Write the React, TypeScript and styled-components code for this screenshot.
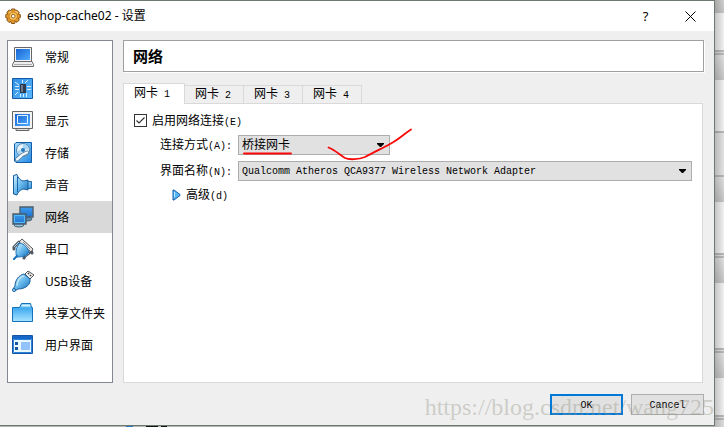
import React, { useState } from "react";
import styled, { createGlobalStyle, css } from "styled-components";

const GlobalStyle = createGlobalStyle`
  *, *::before, *::after { box-sizing: border-box; }
  body { margin: 0; background: #b4b4b4; }
  button, select, input { font: inherit; color: inherit; }
`;

const songFont = `"Liberation Mono", "Noto Sans CJK SC", monospace`;
const uiFont = `"Noto Sans", "Noto Sans CJK SC", sans-serif`;

const Desktop = styled.div`
  display: grid;
  grid-template-columns: minmax(0, 1fr) 9px;
  grid-template-rows: 1fr 1px;
  min-height: 100vh;
  color: #000;
  font: 12px/16px ${songFont};
`;

const Backdrop = styled.div`
  grid-row: 1 / 3;
  grid-column: 2;
  background:
    linear-gradient(to right, rgba(0, 0, 0, 0.18), rgba(0, 0, 0, 0) 9px),
    linear-gradient(
      #d0d0d0 0, #c4c4c4 13px, #f0f0f0 13px, #f0f0f0 50px,
      #b8b8b8 50px, #b8b8b8 52px, #e0e0e0 52px, #e0e0e0 53px, #b8b8b8 53px, #b8b8b8 55px,
      #e0e0e0 55px, #c4c4c4 80px, #f0f0f0 80px, #f0f0f0 131px,
      #b8b8b8 131px, #b8b8b8 133px, #e2e2e2 133px, #e2e2e2 175px,
      #b8b8b8 175px, #b8b8b8 177px, #e0e0e0 177px, #c4c4c4 202px, #f0f0f0 202px, #f0f0f0 253px,
      #b8b8b8 253px, #b8b8b8 255px, #e0e0e0 255px, #e0e0e0 256px, #b8b8b8 256px, #b8b8b8 258px,
      #e0e0e0 258px, #c4c4c4 283px, #f0f0f0 283px, #f0f0f0 348px,
      #b8b8b8 348px, #b8b8b8 350px, #e0e0e0 350px, #e0e0e0 351px, #b8b8b8 351px, #b8b8b8 353px,
      #e0e0e0 353px, #c4c4c4 378px, #f0f0f0 378px, #f0f0f0 415px,
      #b8b8b8 415px, #b8b8b8 417px, #e0e0e0 417px, #e0e0e0 418px, #b8b8b8 418px, #b8b8b8 420px,
      #dcdcdc 420px
    );
`;

const BackdropEdge = styled.div`
  background: linear-gradient(
    to right,
    #b4b4b4 126px, #2878c8 126px, #2878c8 133px, #b4b4b4 133px, #b4b4b4 146px,
    #111 146px, #111 158px, #b4b4b4 158px, #b4b4b4 161px, #111 161px, #111 167px, #b4b4b4 167px
  );
`;

const Dialog = styled.main`
  position: relative;
  display: flex;
  flex-direction: column;
  border: solid #6c7a70;
  border-width: 1px 1px 1px 0;
  background: #efefef;
`;

const TitleBar = styled.header`
  display: flex;
  align-items: center;
  height: 30px;
  padding: 0 1px 0 5px;
  background: #fff;
  font-family: ${uiFont};
`;

const Title = styled.h1`
  flex: 1;
  margin: 0 0 0 5px;
  font-size: 12px;
  font-weight: 400;
`;

const CaptionButton = styled.button`
  display: grid;
  place-items: center;
  width: 45px;
  height: 28px;
  padding: 0;
  border: 0;
  background: none;
  font-size: 13px;
`;

const Body = styled.div`
  flex: 1;
  display: flex;
  gap: 10px;
  padding: 9px 10px 11px 7px;
`;

const Sidebar = styled.nav`
  flex: none;
  width: 106px;
  border: 1px solid #828790;
  background: #fff;
  font-family: ${uiFont};
`;

const NavItem = styled.button<{ $active: boolean }>`
  display: flex;
  align-items: center;
  gap: 11px;
  width: 100%;
  height: 32px;
  padding: 0 0 0 4px;
  border: 0;
  background: ${(p) => (p.$active ? "#d9d9d9" : "transparent")};
  white-space: nowrap;
  text-align: left;
`;

const NavText = styled.span`
  padding-top: 2px;
`;

const Content = styled.section`
  flex: 1;
  min-width: 0;
  display: flex;
  flex-direction: column;
`;

const Heading = styled.h2`
  height: 32px;
  margin: 0 0 11px;
  padding: 0 9px;
  border: 1px solid #a0a0a0;
  box-shadow: 1px 1px #fff;
  background: #fff;
  font: bold 15px/30px "Noto Sans CJK SC", sans-serif;
`;

const TabList = styled.div`
  display: flex;
  align-items: flex-end;
  height: 20px;
`;

const Tab = styled.button<{ $active: boolean }>`
  width: 59px;
  height: 18px;
  padding: 1px 0 0 10px;
  border: 1px solid #d9d9d9;
  border-width: 1px 1px 0 0;
  background: #efefef;
  line-height: 16px;
  text-align: left;
  white-space: nowrap;
  ${(p) =>
    p.$active &&
    css`
      position: relative;
      width: 62px;
      height: 21px;
      margin-bottom: -1px;
      border-left-width: 1px;
      background: #fff;
      line-height: 18px;
    `}
`;

const Pane = styled.div`
  flex: 1;
  display: flex;
  flex-direction: column;
  min-height: 280px;
  margin-right: 1px;
  padding: 10px;
  border: 1px solid #d9d9d9;
  background: #fff;
`;

const CheckRow = styled.label`
  display: flex;
  align-items: flex-start;
  gap: 5px;
  height: 16px;
  margin-bottom: 5px;
`;

const CheckBox = styled.input`
  appearance: none;
  width: 13px;
  height: 13px;
  margin: 0;
  border: 1px solid #333;
  background: #fff;
  &:checked {
    background: #fff url("data:image/svg+xml,%3Csvg xmlns='http://www.w3.org/2000/svg' viewBox='0 0 11 11'%3E%3Cpath d='M1.5 5.5 4 8 9.5 2.5' fill='none' stroke='%23333' stroke-width='1.2'/%3E%3C/svg%3E");
  }
`;

const RowText = styled.span`
  line-height: 16px;
`;

const Fields = styled.div`
  display: grid;
  grid-template-columns: 98px minmax(0, 1fr);
  grid-auto-rows: 20px;
  column-gap: 6px;
  row-gap: 6px;
  align-items: center;
`;

const FieldLabel = styled.label`
  padding-top: 2px;
  text-align: right;
  white-space: nowrap;
`;

const Latin = styled.span`
  font-size: 10px;
`;

const SelectBox = styled.div<{ $width?: string }>`
  position: relative;
  width: ${(p) => p.$width ?? "100%"};
`;

const Select = styled.select<{ $latin?: boolean }>`
  display: block;
  appearance: none;
  width: 100%;
  height: 20px;
  padding: 2px 20px 0 3px;
  border: 1px solid #adadad;
  border-radius: 0;
  background: #e1e1e1;
  font-size: ${(p) => (p.$latin ? "10px" : "12px")};
`;

const Arrow = styled.svg`
  position: absolute;
  top: 8px;
  right: 6px;
  pointer-events: none;
`;

const Marks = styled.svg`
  position: absolute;
  left: 0;
  top: -10px;
  z-index: 1;
  pointer-events: none;
`;

const Advanced = styled.button`
  display: flex;
  align-items: center;
  align-self: flex-start;
  gap: 4px;
  height: 16px;
  margin: 6px 0 0 38px;
  padding: 0;
  border: 0;
  background: none;
`;

const Footer = styled.footer`
  display: flex;
  justify-content: flex-end;
  gap: 8px;
  padding: 0 10px 10px;
`;

const DialogButton = styled.button<{ $primary?: boolean }>`
  width: 73px;
  height: 21px;
  padding: 2px 0 0;
  border: ${(p) => (p.$primary ? "2px solid #0078d7" : "1px solid #adadad")};
  background: #e1e1e1;
  font-size: 10px;
  line-height: 16px;
`;

const Watermark = styled.span`
  position: absolute;
  right: 0;
  bottom: 6px;
  color: rgba(150, 150, 135, 0.4);
  font: 24px/24px "Liberation Serif", serif;
  white-space: nowrap;
  pointer-events: none;
`;

const Gear = () => (
  <svg width="17" height="17" viewBox="0 0 17 17" aria-hidden="true">
    <g fill="#e39a2c" stroke="#865016" strokeWidth="1">
      <path d="M6.7 1h3.2l.5 2 1.4-.9 2.4 2.4-1 1.4 2.1.6v3.2l-2 .6 1 1.6-2.3 2.4-1.8-1-.5 2.2H6.5l-.6-2-1.8 1-2.3-2.4 1-1.7-2-.6V6.5l2-.5-1-1.7 2.4-2.2 1.9.9z" />
      <circle cx="8.2" cy="8.2" r="4.3" fill="#f8c25a" stroke="#c87918" />
      <circle cx="8.2" cy="8.2" r="1.8" fill="#fff" stroke="#96601d" />
    </g>
    <path d="M4 5 6.5 3M10 3l3 2" stroke="#ffe49a" fill="none" />
  </svg>
);

const blueDark = "#145ba5";

const drawings: Record<string, React.ReactNode> = {
  general: (
    <>
      <path d="M2.5 1.5h17v14h-17z" fill="#f5f5f5" stroke="#666" />
      <path d="M4 3h14v11H4z" fill="url(#screen)" />
      <path d="M2 15.5h18l1.5 3v2H.5v-2z" fill="#eee" stroke="#686868" />
      <path d="M2 18.5h18" stroke="#aaa" />
    </>
  ),
  system: (
    <>
      <path d="M.5.5h20v20H.5z" fill="url(#board)" stroke={blueDark} />
      <path d="M8 6h6v9H8z" fill="#323b4b" />
      <path d="M9 7h2v7H9z" fill="#67798e" />
      <path d="M3 8.5h4M3 11.5h4M15 8.5h4M15 11.5h4M10.5 2v3M13 5l3-3M8.5 16v3M11.5 16v3M14.5 15v4M3 4l4 3M3 17l3-3" stroke="#d8f2ff" />
    </>
  ),
  display: (
    <>
      <path d="M.5 1.5h20v17H.5z" fill="#f2f2f2" stroke="#656565" />
      <path d="M3 4h15v12H3z" fill="url(#screen)" />
      <path d="M5.5 5.5h10v8h-10z" fill="none" stroke="#e3f3ff" />
      <path d="M4 18.5h13v2H4z" fill="#ddd" stroke="#666" />
    </>
  ),
  storage: (
    <>
      <path d="M4 .5h15.5v20H4L2.5 19V2z" fill="url(#sky)" stroke={blueDark} />
      <circle cx="11" cy="8" r="6.5" fill="#e4f2fc" stroke="#5683a9" />
      <path d="M11 2a6 6 0 0 1 5.5 5L11 8zM10.5 8 7 13a6 6 0 0 1-2-4z" fill="#a6d5f3" />
      <circle cx="11" cy="8" r="2" fill="#2579be" />
      <path d="M15 10.5 10 13l-5 4.5" stroke="#557b99" strokeWidth="4" strokeLinecap="round" fill="none" />
      <path d="M15 10.5 10 13l-5 4.5" stroke="#f2faff" strokeWidth="2.4" strokeLinecap="round" fill="none" />
    </>
  ),
  audio: (
    <>
      <path d="M15.500 7.500h4v7h-4z" fill="url(#sky)" stroke="#286fa8" />
      <path d="M1.500 1.500 5 .5C6 4 9 7 12 7l4-1v10l-4-1c-3 0-6 3-7 6l-3.500-1z" fill="url(#cone)" stroke="#185b98" />
      <path d="M5.500 3v15" stroke="#1c67a9" />
    </>
  ),
  network: (
    <>
      <ellipse cx="15" cy="13" rx="5" ry="2" fill="#5b8cb0" stroke="#4b5e6c" />
      <path d="M8 1h13v10H8z" fill="url(#monitor)" stroke="#4b5e6c" strokeWidth="1.4" />
      <ellipse cx="7" cy="19" rx="5" ry="2" fill="#8fc0e0" stroke="#4b5e6c" />
      <path d="M1 8h13v10H1z" fill="url(#monitor)" stroke="#4b5e6c" strokeWidth="1.4" />
      <path d="M2.5 9.5h10v7h-10z" fill="none" stroke="#55b9f7" />
    </>
  ),
  serial: (
    <>
      <path d="M7 4 2 9v2M19 12l1 3M17 15l-4 3-1 2" stroke="#4d5a66" strokeWidth="3" strokeLinecap="round" fill="none" />
      <path d="M7 4 2 9M17 15l-4 3" stroke="#a8d8f4" fill="none" />
      <path d="m10 1 11 10-2 3L7 4z" fill="#e6e6e6" stroke="#555" />
      <path d="m11 4 7 7" stroke="#888" />
      <path d="M8 5c4 1 8 5 9 9-2 4-7 5-12 5-2-4-1-10 3-14z" fill="url(#cone)" stroke="#1a70ba" />
      <path d="m5 18-3 3" stroke="#1a70ba" strokeWidth="2" strokeLinecap="round" />
    </>
  ),
  usb: (
    <>
      <path d="m13 4 3-3 6 4-4 4z" fill="#eee" stroke="#555" />
      <path d="m16 3 1 1m1 1 1 1" stroke="#333" strokeWidth="1.5" />
      <path d="M12 4 18 9c1 6-5 10-12 10l-3 2-2-2 2-3C3 10 7 5 12 4z" fill="url(#cone)" stroke="#1a60a0" />
      <path d="M5 16C5 11 8 7 12 6" stroke="#e0f8ff" fill="none" />
      <circle cx="2" cy="20" r="1.5" fill="#a6def8" stroke="#1a60a0" />
    </>
  ),
  folder: (
    <>
      <path d="M.5 5.5h7l2-4h9l1 4h1v14H.5z" fill="#55b6ed" stroke="#1473bd" />
      <path d="M10 2.5h8l.5 2H9z" fill="#d6f2ff" />
      <path d="M1 6h19v13H1z" fill="url(#folder)" />
    </>
  ),
  interface: (
    <>
      <path d="M.5 1.5h20v18H.5z" fill="#e9f7ff" stroke="#1455a5" />
      <path d="M1 2h19v3H1z" fill="#1767c8" />
      <path d="M1.5 5.5h18v13h-18z" fill="none" stroke="#2981dc" />
      <path d="M3 8h3v3H3zM3 13h3v3H3z" fill="#1455a5" />
      <path d="M9 8h9v8H9z" fill="#94c2fb" />
    </>
  ),
};

const Gradients = () => (
  <defs>
    <linearGradient id="screen" x1="0" y1="0" x2="1" y2="1">
      <stop stopColor="#1764d2" />
      <stop offset="1" stopColor="#4eabff" />
    </linearGradient>
    <linearGradient id="monitor" x1="0" y1="0" x2="0" y2="1">
      <stop stopColor="#3f9dee" />
      <stop offset="1" stopColor="#1d71cf" />
    </linearGradient>
    <linearGradient id="board" x1="0" y1="0" x2="1" y2="1">
      <stop stopColor="#2f8fe4" />
      <stop offset="1" stopColor="#5cb8ff" />
    </linearGradient>
    <linearGradient id="sky" x1="0" y1="0" x2="1" y2="1">
      <stop stopColor="#a5dfff" />
      <stop offset="1" stopColor="#2389e3" />
    </linearGradient>
    <linearGradient id="cone" x1="0" y1="0" x2="1" y2="1">
      <stop stopColor="#d5f3ff" />
      <stop offset="0.5" stopColor="#66b9ec" />
      <stop offset="1" stopColor="#126bb5" />
    </linearGradient>
    <linearGradient id="folder" x1="0" y1="0" x2="0" y2="1">
      <stop stopColor="#3fa9f0" />
      <stop offset="1" stopColor="#a4e2ff" />
    </linearGradient>
  </defs>
);

const Icon = ({ name }: { name: string }) => (
  <svg width="22" height="22" viewBox="0 0 22 22" aria-hidden="true">
    <Gradients />
    {drawings[name]}
  </svg>
);

const DropArrow = () => (
  <Arrow width="7" height="4" viewBox="0 0 7 4" aria-hidden="true">
    <path d="M0 0h7v1L4 4H3L0 1z" />
  </Arrow>
);

const sections = [
  ["general", "常规"],
  ["system", "系统"],
  ["display", "显示"],
  ["storage", "存储"],
  ["audio", "声音"],
  ["network", "网络"],
  ["serial", "串口"],
  ["usb", "USB设备"],
  ["folder", "共享文件夹"],
  ["interface", "用户界面"],
];

export default function App() {
  const [section, setSection] = useState("network");
  const [tab, setTab] = useState(1);

  return (
    <>
      <GlobalStyle />
      <Desktop>
        <Dialog>
          <TitleBar>
            <Gear />
            <Title>eshop-cache02 - 设置</Title>
            <CaptionButton aria-label="Help">?</CaptionButton>
            <CaptionButton aria-label="Close">
              <svg width="11" height="11" viewBox="0 0 11 11" aria-hidden="true">
                <path d="m.5.5 10 10m0-10-10 10" stroke="#000" />
              </svg>
            </CaptionButton>
          </TitleBar>
          <Body>
            <Sidebar>
              {sections.map(([id, label]) => (
                <NavItem key={id} $active={id === section} onClick={() => setSection(id)}>
                  <Icon name={id} />
                  <NavText>{label}</NavText>
                </NavItem>
              ))}
            </Sidebar>
            <Content>
              <Heading>网络</Heading>
              <TabList role="tablist">
                {[1, 2, 3, 4].map((n) => (
                  <Tab key={n} role="tab" aria-selected={n === tab} $active={n === tab} onClick={() => setTab(n)}>
                    网卡<Latin> {n}</Latin>
                  </Tab>
                ))}
              </TabList>
              <Pane role="tabpanel">
                <CheckRow>
                  <CheckBox type="checkbox" defaultChecked />
                  <RowText>启用网络连接<Latin>(E)</Latin></RowText>
                </CheckRow>
                <Fields>
                  <FieldLabel htmlFor="mode">连接方式<Latin>(A):</Latin></FieldLabel>
                  <SelectBox $width="152px">
                    <Select id="mode">
                      <option>桥接网卡</option>
                    </Select>
                    <DropArrow />
                    <Marks width="180" height="40" viewBox="0 0 180 40" aria-hidden="true">
                      <g fill="none" stroke="#f80808" strokeWidth="1.8" strokeLinecap="round" strokeLinejoin="round">
                        <path d="M6 28.5h47" />
                        <path d="M90.5 22.5C97 25 102 30 107 33c4 2 14 1.5 20-1 9-5 18-9 25-13 8-4 14-10 21-14.5" />
                      </g>
                    </Marks>
                  </SelectBox>
                  <FieldLabel htmlFor="adapter">界面名称<Latin>(N):</Latin></FieldLabel>
                  <SelectBox>
                    <Select id="adapter" $latin>
                      <option>Qualcomm Atheros QCA9377 Wireless Network Adapter</option>
                    </Select>
                    <DropArrow />
                  </SelectBox>
                </Fields>
                <Advanced>
                  <svg width="10" height="12" viewBox="0 0 10 12" aria-hidden="true">
                    <path d="M1 1h1l6 4.5v1L2 11H1z" fill="#55b7f5" stroke="#155caa" strokeLinejoin="round" />
                    <path d="M2.5 3v5" stroke="#c0eaff" />
                  </svg>
                  <NavText>高级<Latin>(d)</Latin></NavText>
                </Advanced>
              </Pane>
            </Content>
          </Body>
          <Footer>
            <DialogButton $primary>OK</DialogButton>
            <DialogButton>Cancel</DialogButton>
          </Footer>
          <Watermark>https://blog.csdn.net/wang725</Watermark>
        </Dialog>
        <Backdrop />
        <BackdropEdge />
      </Desktop>
    </>
  );
}
